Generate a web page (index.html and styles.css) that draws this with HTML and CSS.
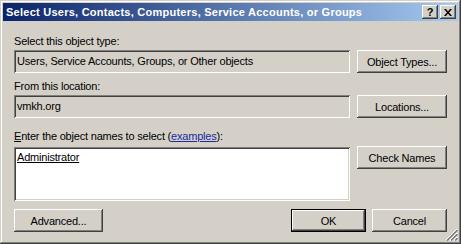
FILE: index.html
```html
<!DOCTYPE html>
<html>
<head>
<meta charset="utf-8">
<link rel="stylesheet" href="styles.css">
</head>
<body>
<div class="window">
  <div class="titlebar">
    <span class="title">Select Users, Contacts, Computers, Service Accounts, or Groups</span>
    <div class="caption-btns">
      <div class="cbtn help">?</div>
      <div class="cbtn close"><svg width="8" height="7" viewBox="0 0 8 7"><path d="M0 0h2l2 2.5L6 0h2L5 3.5 8 7H6L4 4.5 2 7H0l3-3.5z" fill="#000"/></svg></div>
    </div>
  </div>
  <div class="content">
    <div class="grid">
      <div class="label l1">Select this object type:</div>
      <div class="field ro">Users, Service Accounts, Groups, or Other objects</div>
      <div class="btn">Object Types...</div>
      <div class="label l2">From this location:</div>
      <div class="field ro">vmkh.org</div>
      <div class="btn">Locations...</div>
      <div class="label l3"><u>E</u>nter the object names to select (<a class="link">examples</a>):</div>
      <div class="field area"><u class="name">Administrator</u></div>
      <div class="btn top">Check Names</div>
    </div>
    <div class="bottom">
      <div class="btn adv">Advanced...</div>
      <div class="right">
        <div class="btn def">OK</div>
        <div class="btn std">Cancel</div>
      </div>
    </div>
  </div>
  <svg class="grip" width="12" height="12" viewBox="0 0 12 12">
    <g stroke-width="1" shape-rendering="crispEdges">
      <path d="M11 0.5 L0.5 11" stroke="#fff"/>
      <path d="M11.5 1 L1 11.5" stroke="#808080"/>
      <path d="M11.5 4 L4 11.5" stroke="#fff"/>
      <path d="M11.5 5 L5 11.5" stroke="#808080"/>
      <path d="M11.5 8 L8 11.5" stroke="#fff"/>
      <path d="M11.5 9 L9 11.5" stroke="#808080"/>
    </g>
  </svg>
</div>
</body>
</html>
```

FILE: styles.css
```css
html, body {
  margin: 0;
  padding: 0;
  background: #d4d0c8;
}
body {
  font-family: "Liberation Sans", Arial, sans-serif;
  font-size: 11px;
  letter-spacing: -0.2px;
  color: #000;
}
.window {
  position: relative;
  width: 461px;
  height: 244px;
  box-sizing: border-box;
  padding: 3px;
  background: #d4d0c8;
  box-shadow: inset -1px -1px #404040, inset 1px 1px #d4d0c8, inset -2px -2px #808080, inset 2px 2px #fff;
}
.titlebar {
  height: 18px;
  display: flex;
  align-items: center;
  justify-content: space-between;
  background: linear-gradient(to right, #0a246a, #a6caf0);
  padding-left: 3px;
  padding-right: 2px;
}
.title {
  color: #fff;
  font-weight: bold;
  font-size: 11px;
  letter-spacing: 0.25px;
  white-space: nowrap;
}
.caption-btns {
  display: flex;
  gap: 2px;
}
.cbtn {
  width: 16px;
  height: 14px;
  box-sizing: border-box;
  background: #d4d0c8;
  box-shadow: inset -1px -1px #404040, inset 1px 1px #fff, inset -2px -2px #808080, inset 2px 2px #d4d0c8;
  display: flex;
  align-items: center;
  justify-content: center;
  font-weight: bold;
  font-size: 11px;
  letter-spacing: 0;
  line-height: 14px;
}
.close svg { display: block; }
.content {
  padding: 14px 11px 0 11px;
}
.grid {
  display: grid;
  grid-template-columns: 336px 90px;
  column-gap: 7px;
  align-items: start;
}
.label {
  grid-column: 1 / 3;
  line-height: 13px;
  height: 13px;
  white-space: nowrap;
}
.l1 { margin-bottom: 2px; }
.l2 { margin-top: 7px; margin-bottom: 2px; }
.l3 { margin-top: 12px; margin-bottom: 4px; }
.link { color: #1a2aa0; text-decoration: underline; }
.field {
  box-sizing: border-box;
  height: 23px;
  padding: 5px 3px 0 3px;
  line-height: 13px;
  white-space: nowrap;
  overflow: hidden;
  box-shadow: inset 1px 1px #808080, inset -1px -1px #fff, inset 2px 2px #404040, inset -2px -2px #d4d0c8;
}
.ro { background: #d4d0c8; }
.area {
  background: #fff;
  height: 54px;
  padding-top: 4px;
}
.name { color: #000; }
.btn {
  box-sizing: border-box;
  height: 23px;
  display: flex;
  align-items: center;
  justify-content: center;
  background: #d4d0c8;
  box-shadow: inset -1px -1px #404040, inset 1px 1px #fff, inset -2px -2px #808080, inset 2px 2px #d4d0c8;
  white-space: nowrap;
}
.btn.top { margin-top: -1px; }
.bottom {
  display: flex;
  justify-content: space-between;
  margin-top: 8px;
}
.adv { width: 89px; }
.right {
  display: flex;
  gap: 6px;
}
.std { width: 75px; }
.def {
  width: 75px;
  border: 1px solid #000;
  height: 23px;
}
.grip {
  position: absolute;
  right: 3px;
  bottom: 3px;
}
```
